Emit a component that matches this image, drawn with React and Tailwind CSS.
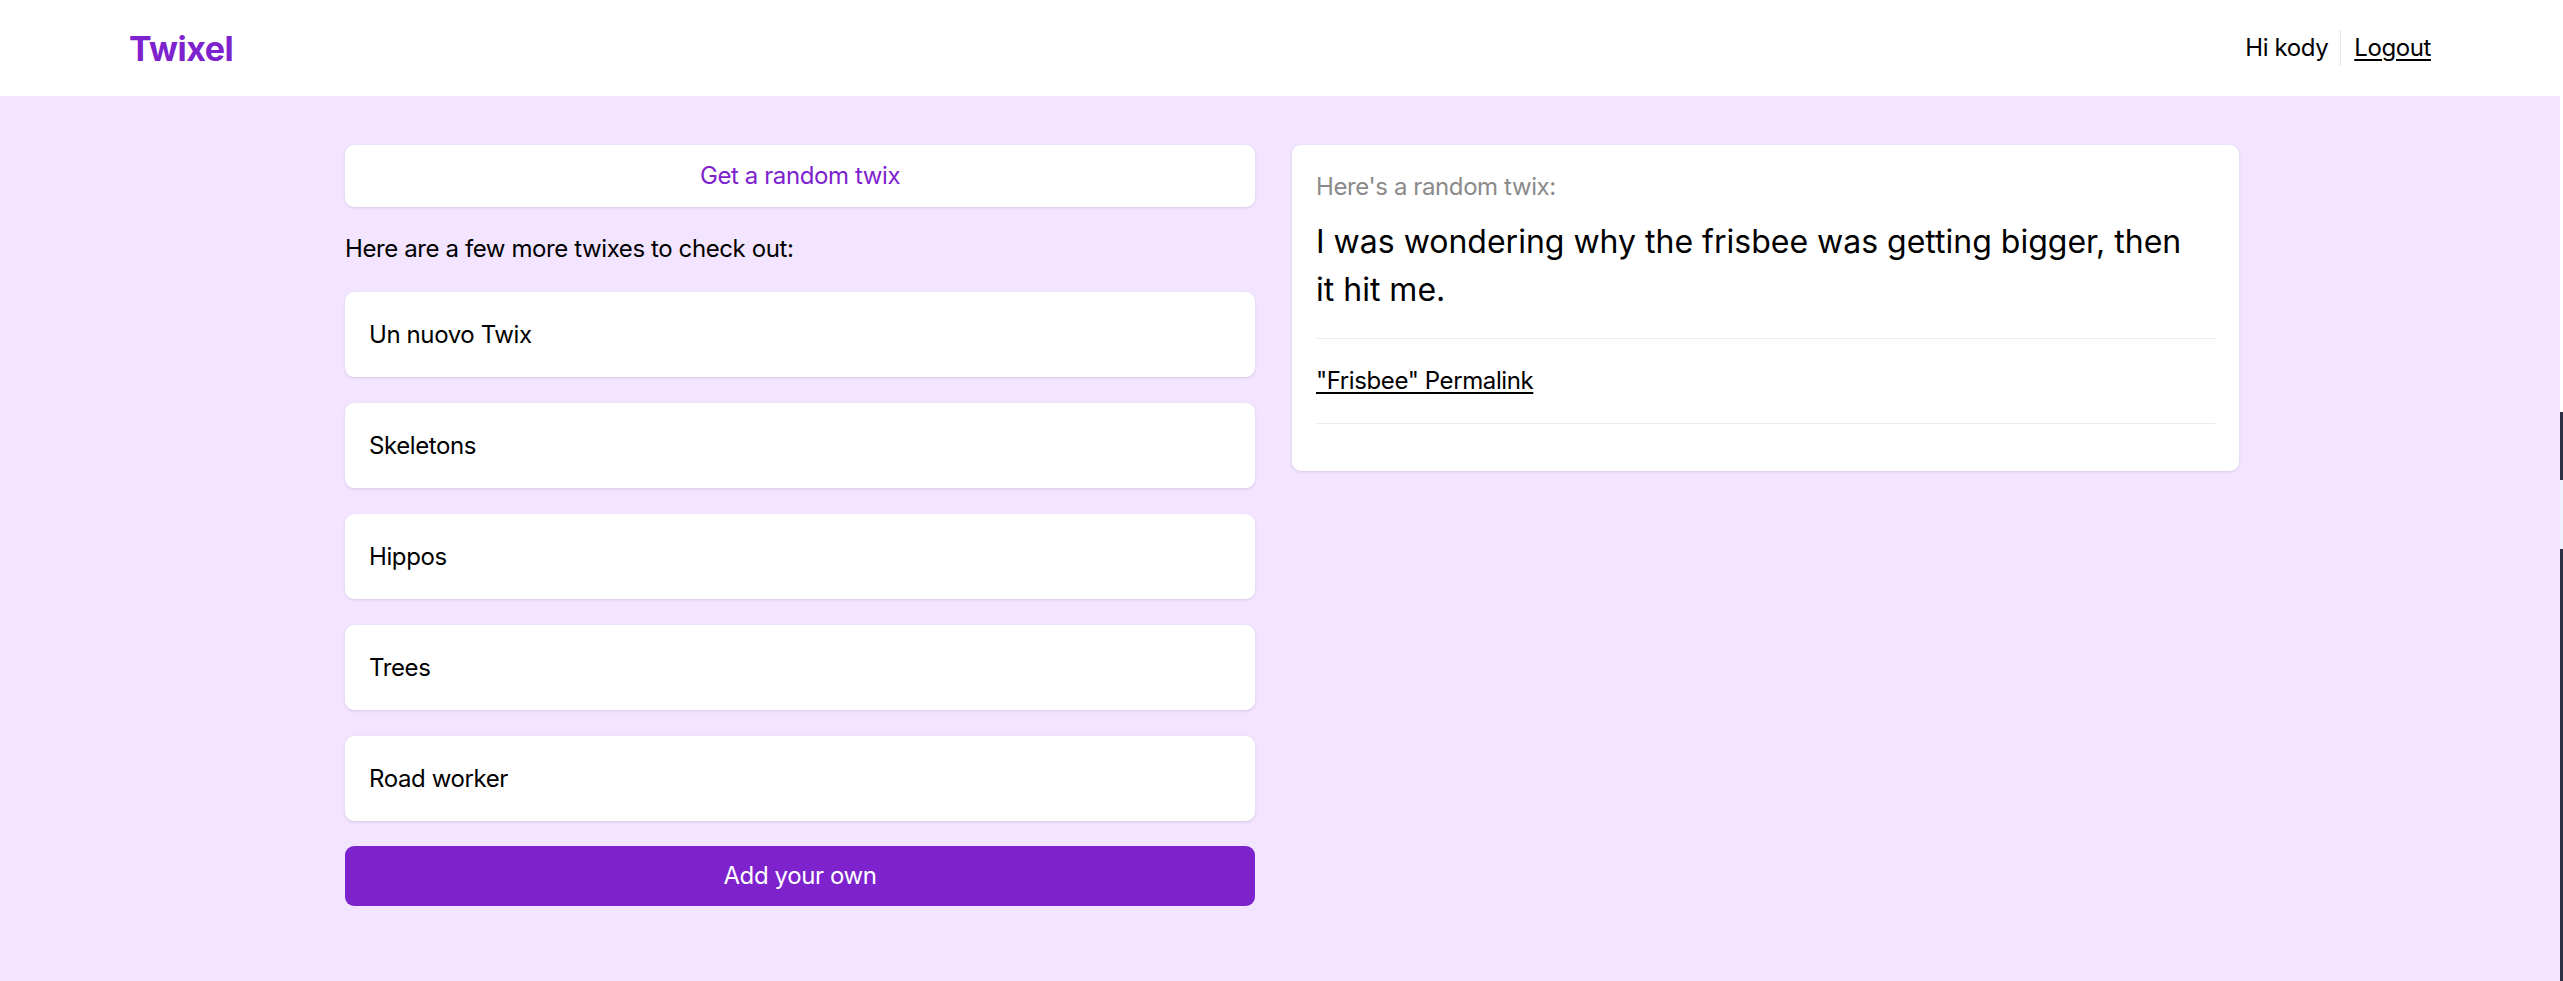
import React from 'react';

const twixes = ['Un nuovo Twix', 'Skeletons', 'Hippos', 'Trees', 'Road worker'];

const App = () => {
  return (
    <div className="flex min-h-[981px] w-full font-['Inter','Liberation_Sans',sans-serif] text-black tracking-[-0.4px]">
      <div className="flex-1 flex flex-col">
        <header className="h-[96px] bg-white flex items-center justify-between px-[129px]">
          <a href="#" className="text-[34px] font-bold tracking-[-0.5px] text-[#7e22ce]">Twixel</a>
          <div className="flex items-center text-[24px] leading-[36px]">
            <span className="pr-[12px] border-r border-[#e5e5e5]">Hi kody</span>
            <a href="#" className="ml-[13px] underline decoration-[2px] underline-offset-[3px]">Logout</a>
          </div>
        </header>

        <main className="flex-1 bg-[#f3e5ff] pt-[49px] pb-[40px]">
          <div className="ml-[345px] grid grid-cols-[910px_947px] gap-[37px] items-start">
            {/* left column */}
            <div className="flex flex-col">
              <button className="h-[62px] w-full rounded-[9px] bg-white text-[24px] text-[#7e22ce] shadow-[0_1px_3px_rgba(60,20,90,0.15)]">
                Get a random twix
              </button>
              <p className="mt-[24px] text-[24px] leading-[36px]">Here are a few more twixes to check out:</p>
              <ul className="mt-[25px] flex flex-col gap-[26px]">
                {twixes.map((t) => (
                  <li key={t}>
                    <a href="#" className="flex items-center h-[85px] px-[24px] rounded-[9px] bg-white text-[24px] shadow-[0_1px_3px_rgba(60,20,90,0.15)]">
                      {t}
                    </a>
                  </li>
                ))}
              </ul>
              <button className="mt-[25px] h-[60px] w-full rounded-[9px] bg-[#7e22ce] text-[24px] text-white">
                Add your own
              </button>
            </div>

            {/* right column */}
            <div className="rounded-[9px] bg-white p-[24px] shadow-[0_1px_3px_rgba(60,20,90,0.15)]">
              <p className="text-[24px] leading-[36px] text-[#8a8a8a]">Here's a random twix:</p>
              <p className="mt-[13px] max-w-[880px] text-[32px] leading-[48px] tracking-normal">
                I was wondering why the frisbee was getting bigger, then it hit me.
              </p>
              <div className="mt-[24px] border-t border-[#ececec] py-[24px]">
                <a href="#" className="text-[24px] leading-[36px] underline decoration-[2px] underline-offset-[3px]">"Frisbee" Permalink</a>
              </div>
              <div className="border-t border-[#ececec] h-[24px]"></div>
            </div>
          </div>
        </main>
      </div>

      {/* thin strip at the right edge */}
      <div className="w-[3px] flex flex-col">
        <div className="h-[412px] bg-white"></div>
        <div className="h-[68px] bg-[#2e3048]"></div>
        <div className="h-[69px] bg-[#eef0ff]"></div>
        <div className="flex-1 bg-[#2e3048]"></div>
      </div>
    </div>
  );
};

export default App;
